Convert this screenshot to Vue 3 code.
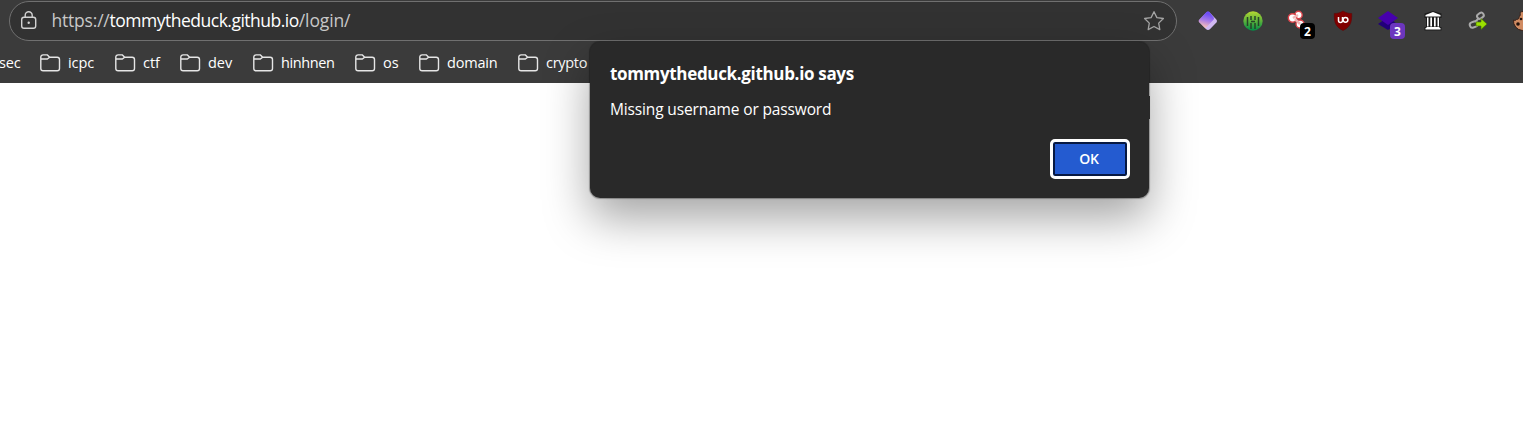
<script setup>
const folders = [
  { name: 'icpc', width: 75, spacing: -0.1 },
  { name: 'ctf', width: 65, spacing: 0 },
  { name: 'dev', width: 73, spacing: 0 },
  { name: 'hinhnen', width: 102, spacing: -0.4 },
  { name: 'os', width: 64, spacing: 0 },
  { name: 'domain', width: 99, spacing: -0.2 },
  { name: 'crypto', width: 72, spacing: -0.3 },
]
</script>

<template>
  <div class="browser">
    <header class="chrome">
      <div class="toolbar">
        <div class="address">
          <svg class="lock" width="18" height="20" viewBox="0 0 18 20" fill="none" stroke="#d2d2d2" stroke-width="1.4">
            <rect x="1.7" y="6.2" width="14" height="11" rx="2.3" />
            <path d="M5.2 6V4.300a3.500 3.500 0 0 1 7 0V6" />
            <circle cx="8.7" cy="11.700" r="1.2" fill="#d2d2d2" stroke="none" />
          </svg>
          <span class="url"><span class="scheme">https://</span><b>tommytheduck.github.io</b><span class="path">/login/</span></span>
          <svg class="star" width="22" height="22" viewBox="0 0 22 22" fill="none" stroke="#a5a5a5" stroke-width="1.3" stroke-linejoin="round">
            <path d="M11 1.700l2.900 5.900 6.500.9-4.700 4.600 1.100 6.500L11 16.500l-5.800 3.100 1.100-6.500L1.600 8.500l6.500-.9z" />
          </svg>
        </div>
        <div class="extensions">
          <svg width="22" height="22" viewBox="0 0 22 22">
            <defs><linearGradient id="gem" x1="0.6" y1="0" x2="0.35" y2="1"><stop offset="0.15" stop-color="#6e4df5" /><stop offset="0.55" stop-color="#a77be8" /><stop offset="1" stop-color="#ffc4b0" /></linearGradient></defs>
            <rect x="3.900" y="3.900" width="14.200" height="14.200" rx="3" transform="rotate(45 11 11)" fill="#d0b8f2" />
            <path d="M9.500 1.900q1.500-1.300 3 0l4.200 5.500q.8 1.200-.2 2.300L9.300 17.300q-1 .8-2 0L2 12q-1-1 0-2z" fill="url(#gem)" />
          </svg>
          <svg width="22" height="22" viewBox="0 0 22 22">
            <defs><linearGradient id="lime" x2="0" y2="1"><stop stop-color="#b5d832" /><stop offset="1" stop-color="#008c45" /></linearGradient></defs>
            <circle cx="11" cy="11" r="9.700" fill="url(#lime)" />
            <path d="M5.500 7v9M9 6v4M9 13v6M13 6v4M13 13v6M16.500 7v9M9 11.500h4" stroke="#274328" stroke-width="1.500" />
          </svg>
          <div class="ext">
            <svg width="22" height="22" viewBox="0 0 22 22">
              <g fill="#fff" stroke="#d94148" stroke-width="1.400"><circle cx="13" cy="14" r="4" /><circle cx="11.500" cy="5" r="3.700" /><circle cx="5.500" cy="8" r="4.200" /></g>
              <path d="M6 8l5-3M8 9l5 5" stroke="#f2b5b5" stroke-width="2.500" />
            </svg>
            <span class="badge">2</span>
          </div>
          <svg width="22" height="22" viewBox="0 0 22 22">
            <path d="M11 1c3 2 6 2.500 8.700 2.500C20 13 18 17 11 20.500 4 17 2 13 2.300 3.500 5 3.500 8 3 11 1z" fill="#800000" stroke="#5f0505" stroke-width=".6" />
            <path d="M6.500 7v3.500a2 2 0 0 0 4 0V7" fill="none" stroke="#fff" stroke-width="1.500" />
            <circle cx="13.500" cy="9.800" r="2.400" fill="none" stroke="#fff" stroke-width="1.500" />
          </svg>
          <div class="ext">
            <svg width="22" height="22" viewBox="0 0 22 22"><path d="M1 14l10-7 9 7-9 6z" fill="#210079" /><path d="M1 8l10-7 10 7-10 7z" fill="#4600ad" /></svg>
            <span class="badge violet">3</span>
          </div>
          <svg width="22" height="22" viewBox="0 0 22 22">
            <path d="M2.500 3.500L11 1l8.500 2.500V8H18v9h1.500v3.500h-17V17H4V8H2.500z" fill="#1c1c1c" />
            <path d="M3.500 6.500V5L11 2l7.500 3v1.500zM4.500 17h13v1h1v1.500h-15V18h1zM5 7.500h1.500v9H5zM8.300 7.500H10v9H8.300zM12 7.500h1.700v9H12zM15.500 7.500H17v9h-1.500z" fill="#fff" />
          </svg>
          <svg width="22" height="22" viewBox="0 0 22 22">
            <g fill="none" stroke="#aaa" stroke-width="2"><rect x="10" y="3.500" width="7" height="5" rx="2.500" transform="rotate(-35 13 6)" /><rect x="2.500" y="12" width="8" height="5.500" rx="2.700" transform="rotate(-20 6 14)" /><path d="M8 12l4-4" /></g>
            <path d="M9 12h5V8.500l6 5.500-6 5.500V16H9z" fill="#9ce000" stroke="#417000" stroke-width=".6" />
          </svg>
          <svg width="22" height="22" viewBox="0 0 22 22">
            <path d="M11 1.500a9.500 9.500 0 1 1-9.500 8.500c1 .8 2.500.4 3-.6 1.700.3 3-1 2.500-2.600C8.500 6 8.500 4 8 2.500q1.500-1 3-1z" fill="#d08b62" stroke="#3a2118" />
            <g fill="#24120c"><circle cx="9" cy="9" r="1.300" /><circle cx="6" cy="14" r="1.800" /></g>
          </svg>
        </div>
      </div>
      <nav class="bookmarks">
        <span class="partial">sec</span>
        <div v-for="f in folders" :key="f.name" class="folder" :style="{ width: f.width + 'px' }">
          <svg width="21" height="20" viewBox="0 0 21 20" fill="none" stroke="#e6e6e6" stroke-width="1.400">
            <path d="M.8 4.200A2.300 2.300 0 0 1 3.100 1.900h4.300l2.300 2.300h7.500a2.300 2.300 0 0 1 2.300 2.300v9a2.300 2.300 0 0 1-2.300 2.300H3.100a2.300 2.300 0 0 1-2.300-2.300zM.8 6h6.500l2.400-1.800" />
          </svg>
          <span :style="{ letterSpacing: f.spacing + 'px' }">{{ f.name }}</span>
        </div>
      </nav>
    </header>
    <main class="page"></main>
    <section class="dialog" role="alertdialog">
      <h1>tommytheduck.github.io says</h1>
      <p>Missing username or password</p>
      <button>OK</button>
    </section>
  </div>
</template>

<style>
body { margin: 0; overflow: hidden; }
</style>
<style scoped>
.browser { position: relative; width: 1523px; height: 448px; overflow: hidden; background: #fff; font-family: "Open Sans", "Noto Sans", sans-serif; color: #fff; }
.chrome { height: 83px; background: #3b3b3b; }
.toolbar { height: 42px; display: flex; align-items: flex-start; }
.address { box-sizing: border-box; flex: none; width: 1168px; height: 40px; margin: 1px 0 0 9px; border: 1px solid #707070; border-radius: 20px; background: #323232; display: flex; align-items: center; padding: 0 11px 0 10px; }
.lock { flex: none; }
.url { margin: -2px 0 0 13.500px; font-size: 17.500px; letter-spacing: -.5px; line-height: 24px; color: #c8c8c8; white-space: nowrap; }
.scheme { letter-spacing: -.2px; }
.path { letter-spacing: -.12px; }
.url b { font-weight: 400; color: #fff; }
.star { margin-left: auto; }
.extensions { display: flex; gap: 23px; margin: 10px 0 0 20px; flex: none; }
.extensions svg { display: block; flex: none; }
.ext { position: relative; width: 22px; height: 22px; }
.badge { position: absolute; left: 13px; top: 13px; width: 15px; height: 16px; border-radius: 4px; background: #000; font: 700 12px/17px "Open Sans", sans-serif; text-align: center; }
.violet { background: #6c36be; }
.bookmarks { height: 41px; display: flex; align-items: center; font-size: 14.500px; line-height: 20px; }
.partial { width: 41px; margin-left: -1px; flex: none; letter-spacing: -.2px; }
.folder { display: flex; align-items: center; gap: 7px; flex: none; white-space: nowrap; }
.folder svg { flex: none; }
.page { height: 365px; background: #fff; }
.dialog { position: absolute; left: 590px; top: 42px; box-sizing: border-box; width: 559px; height: 156px; padding: 20px 19px 18px 20px; border-radius: 10px; background: #292929; box-shadow: 0 0 1px 1px rgba(0,0,0,.3), 0 20px 46px rgba(0,0,0,.36); display: flex; flex-direction: column; }
.dialog::after { content: ""; position: absolute; left: 559px; top: 54px; width: 1px; height: 23px; background: #292929; }
h1 { margin: 0; font-size: 17px; line-height: 24px; font-weight: 700; letter-spacing: -.33px; }
p { margin: 11px 0 0; font-size: 15.500px; line-height: 24px; letter-spacing: -.14px; }
button { align-self: flex-end; flex: none; width: 80px; height: 40px; margin: 18px 0 0; padding: 0 2px 0 0; border: 3px solid #fff; border-radius: 5px; background: #245bd0; box-shadow: inset 0 0 0 2px #071943; color: #fff; font: 600 14px/20px "Open Sans", sans-serif; letter-spacing: -.2px; }
</style>
